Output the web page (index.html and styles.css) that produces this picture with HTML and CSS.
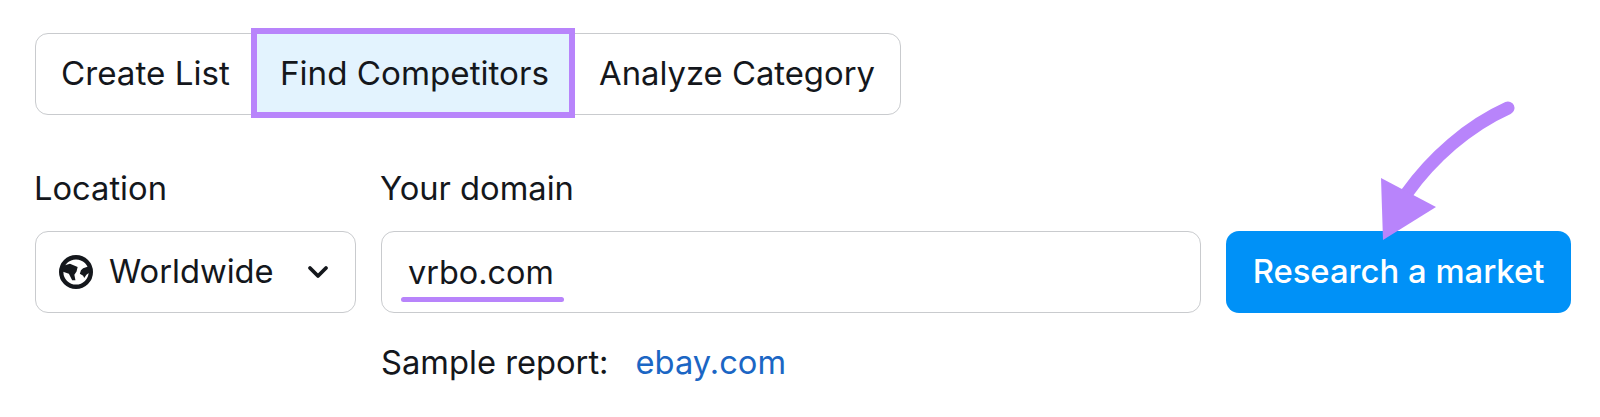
FILE: index.html
```html
<!DOCTYPE html>
<html lang="en">
<head>
    <meta charset="UTF-8">
    <title>Market research</title>
    <link rel="stylesheet" href="styles.css">
</head>
<body>
    <div class="tabs">
        <button class="tab">Create List</button>
        <button class="tab active">Find Competitors</button>
        <button class="tab">Analyze Category</button>
    </div>

    <div class="form-row">
        <div class="field location">
            <label>Location</label>
            <div class="control select">
                <svg class="globe" width="34" height="34" viewBox="0 0 31 31">
                    <circle cx="15.5" cy="15.5" r="13.5" fill="#fff" stroke="#14171c" stroke-width="4"/>
                    <path d="M3 10L10 8 17 11 16 15 14 18 15 23 12 23 9 17 3 15zM28 10L22 12 20 14 19 17 22 19 23 21 25 18 29 15z" fill="#14171c"/>
                </svg>
                <span class="select-value">Worldwide</span>
                <svg class="chevron" width="22" height="14" viewBox="0 0 22 14">
                    <path d="M3 3l8 8 8-8" fill="none" stroke="#14171c" stroke-width="3.8" stroke-linecap="round" stroke-linejoin="round"/>
                </svg>
            </div>
        </div>

        <div class="field domain">
            <label>Your domain</label>
            <div class="control input">
                <span class="input-value">vrbo.com</span>
            </div>
            <div class="sample">
                <span>Sample report:</span>
                <a href="#">ebay.com</a>
            </div>
        </div>

        <button class="submit">Research a market</button>
    </div>

    <svg class="arrow" width="150" height="155" viewBox="0 0 150 155">
        <path d="M138 18C98 36 62 68 37 103" fill="none" stroke="#b884fb" stroke-width="13" stroke-linecap="round"/>
        <path d="M11 88L66 117 13 150z" fill="#b884fb"/>
    </svg>
</body>
</html>
```

FILE: styles.css
```css
* {
    margin: 0;
    padding: 0;
    box-sizing: border-box;
}

body {
    font-family: Inter, "Liberation Sans", sans-serif;
    font-size: 32.7px;
    color: #14171c;
    background: white;
    height: 417px;
    padding: 33px 29px 0 35px;
    position: relative;
    overflow: hidden;
}

.tabs {
    display: inline-flex;
    height: 82px;
    border: 1px solid #c9cbce;
    border-radius: 13px;
}

.tab {
    padding: 0 25px 3px;
    background: none;
    border: none;
    font: inherit;
    font-size: 33.2px;
    color: inherit;
    white-space: nowrap;
}

.tab:first-child {
    padding-right: 23px;
}

.tab:last-child {
    padding-left: 27px;
    font-size: 32.8px;
}

.tab.active {
    padding-left: 27px;
    padding-right: 23px;
    background: #e3f3fe;
    position: relative;
}

/* annotation box drawn round the selected tab */
.tab.active::after {
    content: "";
    position: absolute;
    top: -6px;
    bottom: -4px;
    left: -2px;
    right: -3px;
    border: 6px solid #b884fb;
}

.form-row {
    display: flex;
    gap: 25px;
    align-items: flex-start;
    margin-top: 52px;
}

.field label {
    display: block;
    height: 42px;
    line-height: 42px;
    margin-bottom: 22px;
    margin-left: -1px;
}

.control {
    height: 82px;
    border: 1px solid #c9cbce;
    border-radius: 13px;
    display: flex;
    align-items: center;
}

.location {
    width: 321px;
}

.select {
    padding: 0 26px 0 23px;
}

.select-value {
    margin-left: 16px;
    padding-bottom: 2px;
}

.chevron {
    margin-left: auto;
}

.domain {
    width: 820px;
}

.input {
    padding: 0 26px;
    position: relative;
}

.input-value {
    font-size: 32.4px;
}

/* hand-drawn underline over the field value */
.input-value::after {
    content: "";
    position: absolute;
    left: 19px;
    top: 65px;
    width: 163px;
    height: 5px;
    border-radius: 3px;
    background: #b884fb;
}

.sample {
    display: flex;
    gap: 27px;
    margin-top: 29px;
    line-height: 40px;
}

.sample a {
    color: #1b66c4;
    text-decoration: none;
}

.submit {
    width: 345px;
    height: 82px;
    margin-top: 64px;
    padding-bottom: 3px;
    background: #0091f7;
    color: white;
    border: none;
    border-radius: 13px;
    font: inherit;
    font-size: 32.8px;
    font-weight: 500;
}

.arrow {
    position: absolute;
    left: 1370px;
    top: 90px;
}
```
